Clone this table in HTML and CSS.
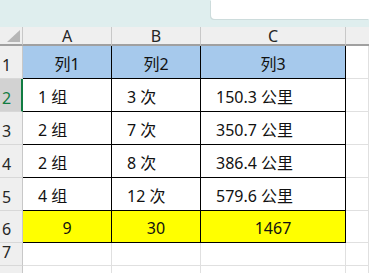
FILE: index.html
```html
<!DOCTYPE html>
<html>
<head>
<meta charset="utf-8">
<link rel="stylesheet" href="styles.css">
</head>
<body>
<div class="ribbon"><div class="namebox"></div></div>
<div class="sheet">
  <div class="corner"><span class="tri"></span></div>
  <div class="colh">A</div>
  <div class="colh">B</div>
  <div class="colh">C</div>
  <div class="colh last"></div>

  <div class="rowh r1">1</div>
  <div class="cell t head ctr">列1</div>
  <div class="cell t head ctr">列2</div>
  <div class="cell t head ctr">列3</div>
  <div class="cell g b1"></div>

  <div class="rowh r1 sel">2</div>
  <div class="cell t">1 组</div>
  <div class="cell t">3 次</div>
  <div class="cell t">150.3 公里</div>
  <div class="cell g"></div>

  <div class="rowh r1">3</div>
  <div class="cell t">2 组</div>
  <div class="cell t">7 次</div>
  <div class="cell t">350.7 公里</div>
  <div class="cell g"></div>

  <div class="rowh r1">4</div>
  <div class="cell t">2 组</div>
  <div class="cell t">8 次</div>
  <div class="cell t">386.4 公里</div>
  <div class="cell g"></div>

  <div class="rowh r1">5</div>
  <div class="cell t">4 组</div>
  <div class="cell t">12 次</div>
  <div class="cell t">579.6 公里</div>
  <div class="cell g"></div>

  <div class="rowh r6">6</div>
  <div class="cell t sum ctr">9</div>
  <div class="cell t sum ctr">30</div>
  <div class="cell t sum ctr">1467</div>
  <div class="cell g"></div>

  <div class="rowh r7">7</div>
  <div class="cell g"></div>
  <div class="cell g"></div>
  <div class="cell g"></div>
  <div class="cell g"></div>

  <div class="rowh r7"></div>
  <div class="cell g"></div>
  <div class="cell g"></div>
  <div class="cell g"></div>
  <div class="cell g"></div>
</div>
</body>
</html>
```

FILE: styles.css
```css
html, body {
  margin: 0;
  padding: 0;
  overflow: hidden;
  background: #ffffff;
  font-family: "Noto Sans", "Noto Sans CJK SC", sans-serif;
}
.ribbon {
  height: 27px;
  background: #dfeeee;
  display: flex;
  justify-content: flex-end;
}
.namebox {
  width: 158px;
  height: 19px;
  background: #ffffff;
  border-bottom-left-radius: 4px;
  box-shadow: -1px 1px 0 #cddcdc;
}
.sheet {
  display: grid;
  grid-template-columns: 23px 89px 89px 145px 23px;
  grid-template-rows: 19px 33px 33px 33px 33px 33px 32px 23px 23px;
}
.corner {
  background: #efefef;
  border-right: 1px solid #c8c8c8;
  border-bottom: 2px solid #a0a0a0;
  box-sizing: border-box;
  position: relative;
}
.tri {
  position: absolute;
  right: 2px;
  bottom: 2px;
  width: 0;
  height: 0;
  border-left: 13px solid transparent;
  border-bottom: 12px solid #b6b6b6;
}
.colh {
  background: #efefef;
  border-right: 1px solid #c8c8c8;
  border-bottom: 2px solid #a0a0a0;
  box-sizing: border-box;
  display: flex;
  align-items: center;
  justify-content: center;
  font-size: 16px;
  color: #262626;
  line-height: 1;
  padding-top: 1px;
}
.colh.last { border-right: none; }
.rowh {
  background: #efefef;
  border-right: 1px solid #c8c8c8;
  border-bottom: 1px solid #d8d8d8;
  box-sizing: border-box;
  display: flex;
  align-items: flex-end;
  padding-left: 2px;
  padding-bottom: 5px;
  font-size: 16px;
  line-height: 1;
  color: #262626;
}
.rowh.sel {
  background: #d2d2d2;
  color: #107c41;
  border-right: 2px solid #107c41;
}
.cell {
  box-sizing: border-box;
  display: flex;
  align-items: center;
  font-size: 16px;
  color: #111;
  white-space: nowrap;
}
.cell.t {
  border-right: 1px solid #000;
  border-bottom: 1px solid #000;
  padding-left: 15px;
  padding-top: 2px;
}
.cell.g {
  border-right: 1px solid #e0e0e0;
  border-bottom: 1px solid #e0e0e0;
}
.cell.head { background: #a6c9ec; }
.cell.sum { background: #ffff00; }
.cell.ctr { justify-content: center; padding-left: 0; }
```
